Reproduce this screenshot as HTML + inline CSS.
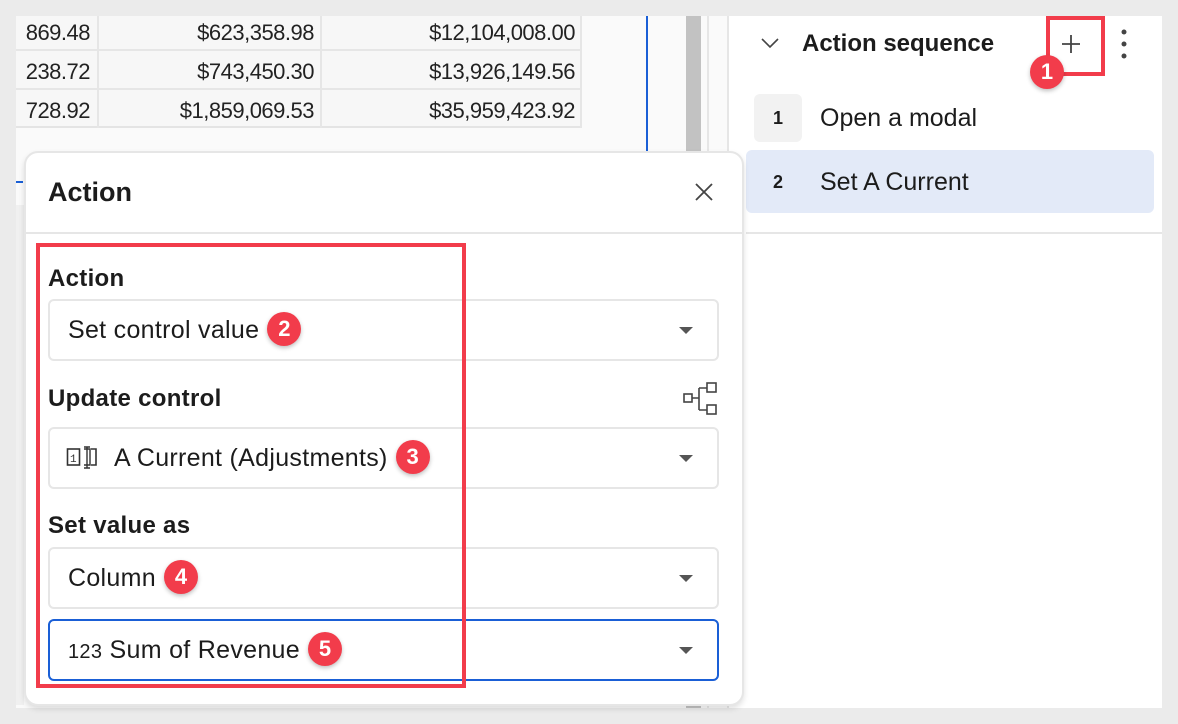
<!DOCTYPE html>
<html><head><style>
*{box-sizing:border-box;margin:0;padding:0}
body{width:1178px;height:724px;background:#ebebeb;position:relative;overflow:hidden;font-family:"Liberation Sans",sans-serif;color:#1c1c1c}
.abs{position:absolute}
.num{font-size:22px;color:#222;text-align:right;letter-spacing:-0.5px}
.badge{position:absolute;width:34px;height:34px;border-radius:50%;background:#f23c4b;color:#fff;font-weight:bold;font-size:22px;text-align:center;line-height:34px;box-shadow:0 2px 4px rgba(0,0,0,.25)}
.ib{display:inline-block;vertical-align:middle;width:34px;height:34px;border-radius:50%;background:#f23c4b;color:#fff;font-weight:bold;font-size:22px;text-align:center;line-height:34px;box-shadow:0 2px 4px rgba(0,0,0,.25);margin-left:8px;margin-top:-4px;letter-spacing:0}
.field{position:absolute;left:48px;width:671px;height:62px;border:2px solid #e6e6e6;border-radius:6px;background:#fff;font-size:25px;padding-left:18px;line-height:58px;letter-spacing:0.3px}
.caret{position:absolute;right:24px;top:26px;width:0;height:0;border-left:7px solid transparent;border-right:7px solid transparent;border-top:7px solid #555}
.lbl{position:absolute;left:48px;font-size:24px;font-weight:bold;letter-spacing:0.3px}
</style></head><body>
<div class="abs" style="left:16px;top:16px;width:1146px;height:692px;background:#fafafa"></div>
<div class="abs" style="left:16px;top:16px;width:566px;height:112px;background:#f7f7f7;border-bottom:2px solid #e4e4e4"></div>
<div class="abs" style="left:16px;top:49px;width:566px;height:2px;background:#e6e6e6"></div>
<div class="abs" style="left:16px;top:88px;width:566px;height:2px;background:#e6e6e6"></div>
<div class="abs" style="left:97px;top:16px;width:2px;height:112px;background:#e6e6e6"></div>
<div class="abs" style="left:320px;top:16px;width:2px;height:112px;background:#e6e6e6"></div>
<div class="abs" style="left:580px;top:16px;width:2px;height:112px;background:#e6e6e6"></div>
<div class="num abs" style="left:16px;top:16px;width:74px;line-height:34px">869.48</div>
<div class="num abs" style="left:16px;top:55px;width:74px;line-height:34px">238.72</div>
<div class="num abs" style="left:16px;top:94px;width:74px;line-height:34px">728.92</div>
<div class="num abs" style="left:99px;top:16px;width:215px;line-height:34px">$623,358.98</div>
<div class="num abs" style="left:99px;top:55px;width:215px;line-height:34px">$743,450.30</div>
<div class="num abs" style="left:99px;top:94px;width:215px;line-height:34px">$1,859,069.53</div>
<div class="num abs" style="left:322px;top:16px;width:253px;line-height:34px">$12,104,008.00</div>
<div class="num abs" style="left:322px;top:55px;width:253px;line-height:34px">$13,926,149.56</div>
<div class="num abs" style="left:322px;top:94px;width:253px;line-height:34px">$35,959,423.92</div>
<div class="abs" style="left:646px;top:16px;width:2px;height:136px;background:#1a5fd6"></div>
<div class="abs" style="left:16px;top:181px;width:7px;height:2px;background:#1a5fd6"></div>
<div class="abs" style="left:16px;top:205px;width:8px;height:500px;background:#f0f0f0"></div>
<div class="abs" style="left:686px;top:16px;width:15px;height:692px;background:#c2c2c2"></div>
<div class="abs" style="left:707px;top:16px;width:2px;height:692px;background:#e6e6e6"></div>
<div class="abs" style="left:727px;top:16px;width:435px;height:692px;background:#fff;border-left:2px solid #e6e6e6"></div>
<svg class="abs" style="left:760px;top:36px" width="20" height="14"><path d="M2 3 L10 11 L18 3" fill="none" stroke="#444" stroke-width="1.6"/></svg>
<div class="abs" style="left:802px;top:29px;font-size:24px;font-weight:bold;line-height:30px">Action sequence</div>
<svg class="abs" style="left:1060px;top:33px" width="22" height="22"><path d="M11 2V20M2 11H20" stroke="#444" stroke-width="1.8"/></svg>
<div class="abs" style="left:1046px;top:16px;width:59px;height:60px;border:4px solid #f23c4b"></div>
<div class="badge" style="left:1030px;top:55px">1</div>
<svg class="abs" style="left:1119px;top:28px" width="10" height="32"><circle cx="5" cy="4" r="2.5" fill="#444"/><circle cx="5" cy="16" r="2.5" fill="#444"/><circle cx="5" cy="28" r="2.5" fill="#444"/></svg>
<div class="abs" style="left:754px;top:94px;width:48px;height:48px;background:#f2f2f2;border-radius:6px;text-align:center;line-height:48px;font-weight:bold;font-size:18px">1</div>
<div class="abs" style="left:820px;top:103px;font-size:25px;line-height:30px">Open a modal</div>
<div class="abs" style="left:746px;top:150px;width:408px;height:63px;background:#e3eaf8;border-radius:6px"></div>
<div class="abs" style="left:754px;top:158px;width:48px;height:48px;text-align:center;line-height:48px;font-weight:bold;font-size:18px">2</div>
<div class="abs" style="left:820px;top:167px;font-size:25px;line-height:30px">Set A Current</div>
<div class="abs" style="left:746px;top:232px;width:416px;height:2px;background:#e6e6e6"></div>
<div class="abs" style="left:24px;top:151px;width:720px;height:555px;background:#fff;border:2px solid #e6e6e6;border-radius:14px;box-shadow:0 3px 6px rgba(0,0,0,.12)"></div>
<div class="abs" style="left:48px;top:176px;font-size:27px;font-weight:bold;line-height:32px">Action</div>
<svg class="abs" style="left:694px;top:182px" width="20" height="20"><path d="M2 2L18 18M18 2L2 18" stroke="#444" stroke-width="1.8"/></svg>
<div class="abs" style="left:26px;top:232px;width:716px;height:2px;background:#e6e6e6"></div>
<div class="lbl" style="top:265px">Action</div>
<div class="field" style="top:299px">Set control value<span class="ib">2</span><span class="caret"></span></div>
<div class="lbl" style="top:385px">Update control</div>
<svg class="abs" style="left:683px;top:381px" width="36" height="36"><rect x="1" y="13" width="8" height="8" fill="none" stroke="#444" stroke-width="1.6"/><rect x="24" y="2" width="9" height="9" fill="none" stroke="#444" stroke-width="1.6"/><rect x="24" y="24" width="9" height="9" fill="none" stroke="#444" stroke-width="1.6"/><path d="M9 17H16M16 7V29M16 7H24M16 29H24" fill="none" stroke="#444" stroke-width="1.6"/></svg>
<div class="field" style="top:427px;padding-left:64px">A Current (Adjustments)<span class="ib">3</span><span class="caret"></span></div>
<svg class="abs" style="left:66px;top:446px" width="32" height="26"><rect x="1.5" y="3" width="12" height="16" fill="none" stroke="#333" stroke-width="1.6"/><text x="4" y="16" font-size="11" font-family="Liberation Mono" fill="#333">1</text><path d="M18 3H24V19H18M21 1V22M18 1H24M18 22H24" fill="none" stroke="#333" stroke-width="1.4"/><path d="M25 3H30V19H25" fill="none" stroke="#333" stroke-width="1.6"/></svg>
<div class="lbl" style="top:512px">Set value as</div>
<div class="field" style="top:547px">Column<span class="ib">4</span><span class="caret"></span></div>
<div class="field" style="top:619px;border-color:#1a5fd6;padding-left:18px"><span style="font-size:20px">123</span> Sum of Revenue<span class="ib">5</span><span class="caret"></span></div>
<div class="abs" style="left:36px;top:243px;width:430px;height:445px;border:4px solid #f23c4b"></div>
</body></html>
